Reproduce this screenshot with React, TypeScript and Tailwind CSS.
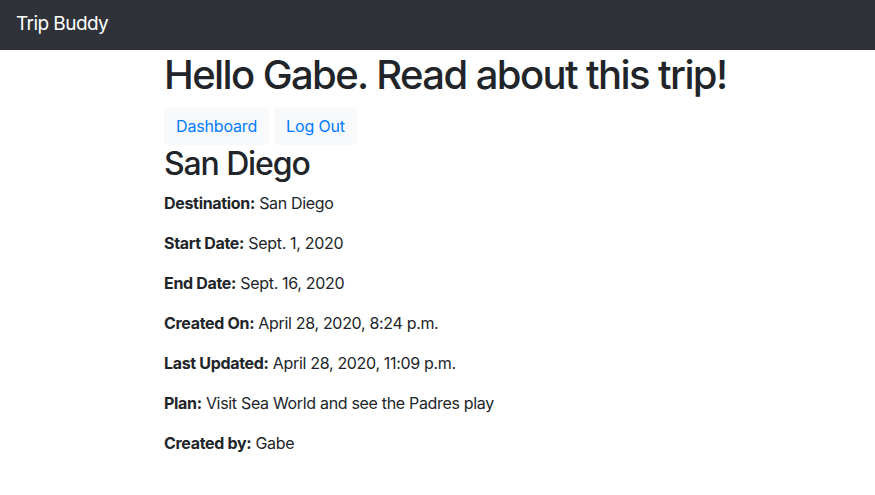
import React from "react";

const details = [
  { label: "Destination:", value: "San Diego" },
  { label: "Start Date:", value: "Sept. 1, 2020" },
  { label: "End Date:", value: "Sept. 16, 2020" },
  { label: "Created On:", value: "April 28, 2020, 8:24 p.m." },
  { label: "Last Updated:", value: "April 28, 2020, 11:09 p.m." },
  { label: "Plan:", value: "Visit Sea World and see the Padres play" },
  { label: "Created by:", value: "Gabe" },
];

const App = () => {
  return (
    <div className="min-h-screen bg-white text-[#212529] font-['Inter','Liberation_Sans',sans-serif] tracking-[-0.02em]">
      <nav className="h-[50px] bg-[#2f3339] flex items-center px-4 pb-[3px]">
        <span className="text-white text-[19px] leading-[30px] tracking-[-0.03em]">Trip Buddy</span>
      </nav>

      <div className="pl-[164px] pr-4 pt-px">
        <h1 className="text-[40px] leading-[48px] font-medium mb-2 tracking-[-0.04em]">
          Hello Gabe. Read about this trip!
        </h1>

        <div className="flex gap-[5px]">
          <button className="bg-[#f8f9fa] text-[#007bff] text-base leading-6 px-3 py-[7px] rounded tracking-[-0.01em]">
            Dashboard
          </button>
          <button className="bg-[#f8f9fa] text-[#007bff] text-base leading-6 px-3 py-[7px] rounded tracking-[-0.01em]">
            Log Out
          </button>
        </div>

        <h2 className="text-[32px] leading-[38px] font-medium mb-2 tracking-[-0.035em]">San Diego</h2>

        {details.map((d) => (
          <p key={d.label} className="text-base leading-6 mb-4">
            <strong className="font-bold">{d.label}</strong> {d.value}
          </p>
        ))}
      </div>
    </div>
  );
};

export default App;
